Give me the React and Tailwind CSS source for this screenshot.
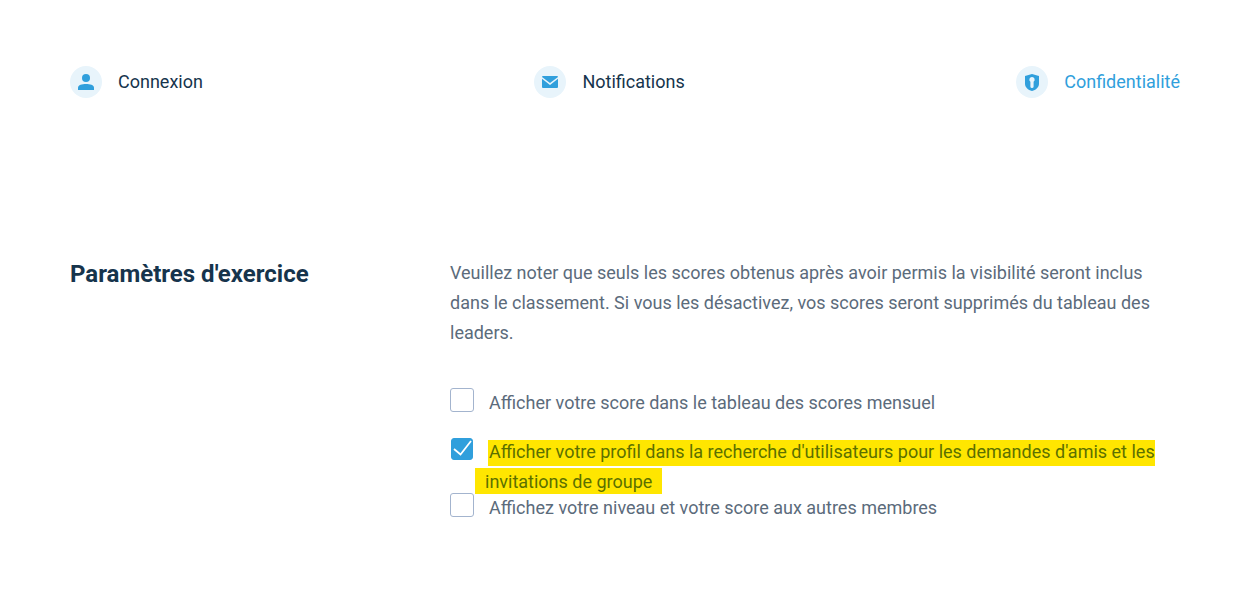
import { useState } from 'react';

const UserIcon = () => (
  <svg viewBox="0 0 16 16" className="h-4 w-4" fill="currentColor" aria-hidden="true">
    <circle cx="8" cy="4" r="4" />
    <path d="M0 16v-2.500C0 11 4 10 8 10s8 1 8 3.500V16z" />
  </svg>
);

const MailIcon = () => (
  <svg viewBox="0 0 16 12" className="h-3 w-4" fill="currentColor" aria-hidden="true">
    <path d="M1 0h14a1 1 0 0 1 1 .9L8 7.100 0 .9A1 1 0 0 1 1 0z" />
    <path d="M0 2.700 8 9l8-6.300V11a1 1 0 0 1-1 1H1a1 1 0 0 1-1-1z" />
  </svg>
);

const ShieldIcon = () => (
  <svg viewBox="0 0 14 17" className="h-[17px] w-3.5" fill="currentColor" aria-hidden="true">
    <path
      fillRule="evenodd"
      d="M7 0 14 2v7.500c0 4-3 6.300-7 7.500-4-1.200-7-3.500-7-7.500V2zM7 3a2.600 2.600 0 0 0-1.600 4.700V12.500a1.600 1.600 0 0 0 3.200 0V7.700A2.600 2.600 0 0 0 7 3z"
    />
  </svg>
);

const tabs = [
  { label: 'Connexion', icon: UserIcon },
  { label: 'Notifications', icon: MailIcon },
  { label: 'Confidentialité', icon: ShieldIcon, active: true },
];

const Checkbox = ({ id, checked, onChange }) => (
  <span className="grid h-6 w-6 shrink-0">
    <input
      id={id}
      type="checkbox"
      checked={checked}
      onChange={onChange}
      className="peer col-start-1 row-start-1 h-6 w-6 appearance-none rounded-[3px] border border-[#a3b4ce] bg-white checked:ml-px checked:h-[22px] checked:w-[22px] checked:border-[#309fdc] checked:bg-[#309fdc]"
    />
    <svg
      viewBox="0 0 22 22"
      className="pointer-events-none col-start-1 row-start-1 ml-px hidden h-[22px] w-[22px] peer-checked:block"
      fill="none"
      stroke="white"
      strokeWidth="1.800"
      aria-hidden="true"
    >
      <path d="M3 11 9.500 16.500 20 3" />
    </svg>
  </span>
);

const App = () => {
  const [settings, setSettings] = useState({ score: false, profile: true, level: false });

  const toggle = (key) => () => setSettings((prev) => ({ ...prev, [key]: !prev[key] }));

  return (
    <div className="bg-white pt-[66px] pr-[55px] pb-16 pl-[70px] font-[Roboto,sans-serif] text-lg text-[#5b6b7b]">
      <nav className="flex items-center justify-between">
        {tabs.map(({ label, icon: Icon, active }) => (
          <a
            key={label}
            href="#"
            className={`flex h-8 items-center gap-4 ${active ? 'text-[#309fdc]' : 'text-[#16344c]'}`}
          >
            <span className="flex h-8 w-8 items-center justify-center rounded-full bg-[#e8f4fb] text-[#309fdc]">
              <Icon />
            </span>
            {label}
          </a>
        ))}
      </nav>

      <section className="mt-40 flex">
        <h1 className="w-[380px] shrink-0 text-2xl leading-8 font-bold text-[#16344c]">Paramètres d'exercice</h1>

        <div className="flex-1">
          <p className="leading-[30px]">
            Veuillez noter que seuls les scores obtenus après avoir permis la visibilité seront inclus dans le
            classement. Si vous les désactivez, vos scores seront supprimés du tableau des leaders.
          </p>

          <div className="mt-10">
            <div className="flex items-start">
              <Checkbox id="score" checked={settings.score} onChange={toggle('score')} />
              <label htmlFor="score" className="pl-[15px] leading-[30px]">
                Afficher votre score dans le tableau des scores mensuel
              </label>
            </div>

            <div className="mt-5 flex items-start">
              <Checkbox id="profile" checked={settings.profile} onChange={toggle('profile')} />
              <label htmlFor="profile" className="flex flex-col items-start gap-0.5 pt-0.5 pl-px text-[#5b7000]">
                <span className="ml-[13px] h-[26px] bg-[#ffe600] pl-px leading-6">
                  Afficher votre profil dans la recherche d'utilisateurs pour les demandes d'amis et les
                </span>
                <span className="h-[26px] bg-[#ffe600] px-2.5 leading-7">invitations de groupe</span>
              </label>
            </div>

            <div className="-mt-px flex items-start">
              <Checkbox id="level" checked={settings.level} onChange={toggle('level')} />
              <label htmlFor="level" className="pl-[15px] leading-[30px]">
                Affichez votre niveau et votre score aux autres membres
              </label>
            </div>
          </div>
        </div>
      </section>
    </div>
  );
};

export default App;
